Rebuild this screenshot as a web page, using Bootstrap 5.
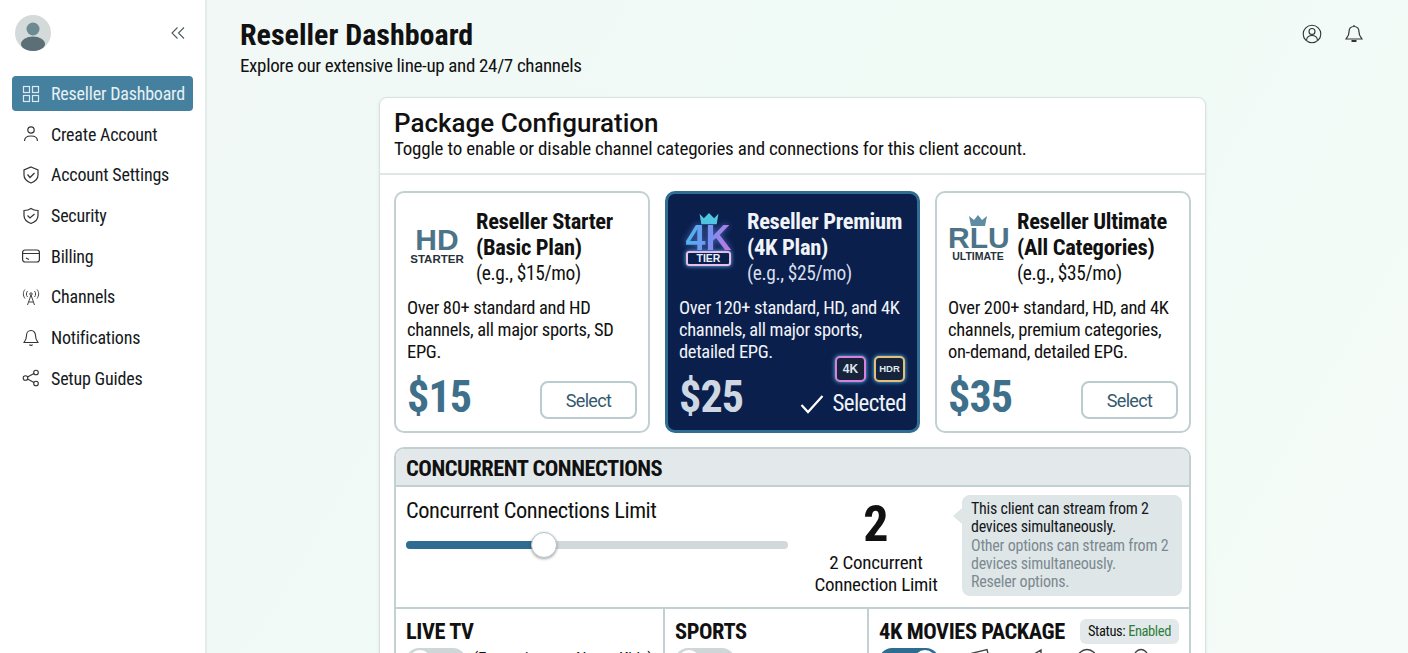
<!DOCTYPE html>
<html lang="en">
<head>
  <meta charset="UTF-8">
  <meta name="viewport" content="width=device-width, initial-scale=1.0">
  <title>Reseller Dashboard</title>
  <link href="https://cdn.jsdelivr.net/npm/bootstrap@5.3.3/dist/css/bootstrap.min.css" rel="stylesheet">
  <script src="https://cdn.jsdelivr.net/npm/bootstrap@5.3.3/dist/js/bootstrap.bundle.min.js" defer></script>
  <style>
    body {
      font-family: Roboto, "Liberation Sans", sans-serif;
      font-stretch: 75%;
      color: #111;
      height: 653px;
      overflow: hidden;
    }
    .side-panel {
      width: 207px;
      height: 653px;
      background: #fff;
      border-right: 2px solid #e4ecea;
      padding: 15px 12px 0 12px;
    }
    .side-top { margin-bottom: 25px; }
    .avatar-disc {
      width: 36px;
      height: 36px;
      border-radius: 50%;
      background: #d3dad9;
      overflow: hidden;
      margin-left: 3px;
    }
    .side-item {
      display: flex;
      align-items: center;
      gap: 11px;
      height: 35px;
      margin-bottom: 5.7px;
      padding-left: 10px;
      border-radius: 4px;
      font-size: 18px;
      letter-spacing: -.2px;
      color: #15191c;
      text-decoration: none;
    }
    .side-item.on {
      background: #46809f;
      color: #e6f1f5;
    }
    .side-item svg { flex: none; }
    .main-area {
      height: 653px;
      padding: 16px 0 0 33px;
      background: linear-gradient(120deg, #f1f8f6, #f0fbf6 55%, #f5fbf8);
    }
    .page-title {
      font-size: 30px;
      font-weight: 700;
      font-stretch: 80%;
      line-height: 38px;
      margin: 0;
    }
    .page-sub { font-size: 19px; line-height: 23px; letter-spacing: -.34px; }
    .top-icons { padding-right: 44px; gap: 22px; }
    .top-glyph { margin-top: 8px; }
    .config-panel {
      width: 827px;
      margin: 20px 0 0 139px;
      background: #fff;
      border: 1px solid #d8e3e1;
      border-radius: 8px;
      box-shadow: 0 1px 3px rgba(60, 90, 90, .12);
    }
    .config-head {
      padding: 10px 14px 0;
      border-bottom: 2px solid #dfe7e6;
      height: 77px;
    }
    .config-title {
      font-size: 26px;
      font-weight: 500;
      font-stretch: 100%;
      line-height: 30px;
      margin: 0;
    }
    .config-sub { font-size: 19px; line-height: 22px; letter-spacing: -.2px; }
    .config-body { padding: 16px 14px 0; }
    .plan-row { display: grid; grid-template-columns: 256px 255px 256px; gap: 15px; }
    .plan-box {
      position: relative;
      height: 242px;
      border: 2px solid #c3d0d2;
      border-radius: 10px;
      padding: 16px 11px;
      background: #fff;
    }
    .plan-box.picked {
      background: #0b1f4d;
      border: 3px solid #2f6d92;
      color: #f0f4f8;
      padding: 15px 10px 15px 11px;
    }
    .plan-top { display: flex; gap: 9px; height: 84px; }
    .plan-logo { width: 60px; flex: none; text-align: center; }
    .picked .plan-logo { width: 59px; }
    .plan-name { font-size: 22.5px; font-weight: 700; line-height: 26px; letter-spacing: -.3px; white-space: nowrap; margin-top: -1px; }
    .plan-note { font-size: 19.4px; line-height: 27px; letter-spacing: -.35px; }
    .plan-note.dim { color: #d6deea; }
    .plan-desc { font-size: 18.5px; line-height: 22px; margin-top: 4px; letter-spacing: -.32px; }
    .plan-foot {
      position: absolute;
      left: 11px;
      right: 11px;
      bottom: 11px;
      display: flex;
      justify-content: space-between;
      align-items: flex-end;
    }
    .picked .plan-foot { bottom: 10px; }
    .plan-price {
      font-size: 44px;
      font-weight: 700;
      line-height: 46px;
      letter-spacing: -.8px;
      color: #3e6f8b;
    }
    .picked .plan-price { color: #cfd8e2; }
    .pick-btn {
      width: 97px;
      height: 38px;
      padding: 0;
      margin-bottom: 1px;
      font-size: 18px;
      letter-spacing: -.7px;
      color: #34596f;
      border: 2px solid #bccbce;
      border-radius: 8px;
      background: #fff;
    }
    .logo-big {
      font-family: "Liberation Sans", sans-serif;
      font-stretch: 100%;
      font-weight: 700;
      font-size: 30px;
      line-height: 26px;
      color: #4d7389;
    }
    .logo-big.tight { line-height: 24px; }
    .logo-small {
      font-family: "Liberation Sans", sans-serif;
      font-stretch: 100%;
      font-weight: 700;
      font-size: 11.5px;
      line-height: 13px;
      color: #26323a;
    }
    .logo-small.wide { font-size: 10.5px; }
    .logo-hd { padding-top: 18px; }
    .logo-premium { padding-top: 3px; }
    .logo-rlu { padding-top: 6px; }
    .logo-4k {
      font-family: "Liberation Sans", sans-serif;
      font-stretch: 100%;
      font-weight: 700;
      font-size: 36px;
      line-height: 26px;
      margin-top: -1px;
      background: linear-gradient(100deg, #38c6ef, #7d8df0 55%, #e56fd6);
      -webkit-background-clip: text;
      background-clip: text;
      color: transparent;
      filter: drop-shadow(0 0 3px rgba(110, 150, 255, .6));
    }
    .logo-tier {
      width: 45px;
      margin: 0 auto;
      border: 2px solid #e8bfe6;
      border-radius: 3px;
      font-family: "Liberation Sans", sans-serif;
      font-stretch: 100%;
      font-weight: 700;
      font-size: 10.5px;
      line-height: 11px;
      color: #e6f0ff;
      box-shadow: 0 0 4px #6fc0ff;
    }
    .fmt-badges {
      position: absolute;
      top: 162px;
      right: 12px;
      display: flex;
      gap: 8px;
    }
    .fmt-badge {
      width: 31px;
      height: 26px;
      border: 2px solid #d97fe0;
      border-radius: 5px;
      background: #17233a;
      font-family: "Liberation Sans", sans-serif;
      font-stretch: 100%;
      font-weight: 700;
      font-size: 12px;
      line-height: 22px;
      text-align: center;
      color: #dfe6ee;
      box-shadow: 0 0 4px #5cc7ea;
    }
    .fmt-badge.hdr { border-color: #e5c07a; font-size: 9.5px; }
    .picked-label { font-size: 23px; line-height: 30px; letter-spacing: -.6px; color: #eef2f6; margin-bottom: 1px; }
    .conn-box {
      margin-top: 14px;
      border: 2px solid #c3d0d2;
      border-bottom: 0;
      border-radius: 10px 10px 0 0;
      overflow: hidden;
    }
    .conn-head {
      height: 38px;
      padding-left: 10px;
      background: #e3e9ea;
      border-bottom: 2px solid #c3d0d2;
      font-size: 22.5px;
      font-weight: 700;
      line-height: 38px;
      letter-spacing: -.5px;
    }
    .conn-body {
      display: flex;
      height: 122px;
      border-bottom: 2px solid #c3d0d2;
    }
    .limit-col { width: 411px; padding: 8px 0 0 10px; }
    .limit-label { font-size: 22.4px; line-height: 30px; letter-spacing: -.43px; }
    .track {
      position: relative;
      width: 382px;
      height: 8px;
      margin-top: 16px;
      border-radius: 4px;
      background: #d1d9da;
    }
    .track-fill {
      height: 8px;
      border-radius: 4px;
      background: #2f6c92;
    }
    .track-knob {
      position: absolute;
      top: -9px;
      width: 26px;
      height: 26px;
      border-radius: 50%;
      background: #fff;
      border: 1px solid #b8c4c8;
      box-shadow: 0 1px 3px rgba(0, 0, 0, .35);
    }
    .count-col { width: 138px; text-align: center; padding-top: 9px; }
    .count-num { font-size: 50px; font-weight: 700; line-height: 56px; }
    .count-note { font-size: 19px; line-height: 22px; letter-spacing: -.25px; white-space: nowrap; }
    .tip-bubble {
      position: relative;
      width: 220px;
      height: 101px;
      margin: 8px 0 0 17px;
      padding: 5px 0 0 9px;
      border-radius: 8px;
      background: #dfe6e8;
      font-size: 16px;
      line-height: 18.3px;
      letter-spacing: -.24px;
      color: #7b8a90;
    }
    .tip-bubble::before {
      content: "";
      position: absolute;
      left: -9px;
      top: 13px;
      border-style: solid;
      border-width: 8px 9px 8px 0;
      border-color: transparent #dfe6e8 transparent transparent;
    }
    .tip-bubble strong { font-weight: 400; color: #14181b; }
    .cat-row { display: grid; grid-template-columns: 269px 204px 1fr; }
    .cat-col { height: 90px; padding: 8px 10px 0; border-right: 2px solid #c3d0d2; }
    .cat-col:last-child { border-right: 0; }
    .cat-title { font-size: 22.4px; font-weight: 700; line-height: 28px; letter-spacing: -.4px; white-space: nowrap; }
    .status-pill {
      padding: 0 8px;
      height: 25px;
      border-radius: 6px;
      background: #e3e9ea;
      font-size: 14.5px;
      line-height: 25px;
      letter-spacing: -.4px;
      white-space: nowrap;
    }
    .status-pill span { color: #2e7d3c; }
    .cat-switch {
      position: relative;
      flex: none;
      width: 60px;
      height: 26px;
      border-radius: 13px;
      background: #ced6d7;
    }
    .cat-switch::after {
      content: "";
      position: absolute;
      top: 2px;
      left: 3px;
      width: 22px;
      height: 22px;
      border-radius: 50%;
      background: #fff;
    }
    .cat-switch.live { background: #2f6c92; }
    .cat-switch.live::after { left: 35px; }
    .cat-extra { font-size: 17px; line-height: 20px; letter-spacing: -.26px; white-space: nowrap; }
    .cat-line { display: flex; gap: 7px; margin-top: 3px; }
    .cat-glyphs { gap: 32px; margin-left: 22px; }
  </style>
</head>
<body>
  <div class="d-flex">
    <!-- sidebar -->
    <aside class="side-panel flex-shrink-0">
      <div class="d-flex justify-content-between align-items-center pe-2 side-top">
        <div class="avatar-disc">
          <svg width="36" height="36" viewBox="0 0 36 36"><circle cx="18" cy="14" r="6.5" fill="#6d8a92"/><ellipse cx="18" cy="29" rx="12" ry="7.5" fill="#5d6f76"/></svg>
        </div>
        <svg width="14" height="14" viewBox="0 0 14 14" fill="none" stroke="#4a5a62" stroke-width="1.1"><path d="M6.500 1.500 1 7l5.500 5.500M13 1.500 7.500 7l5.500 5.500"/></svg>
      </div>
      <a class="side-item on" href="#">
        <svg width="18" height="18" viewBox="0 0 18 18" fill="none" stroke="#dcebf1" stroke-width="1.2"><rect x="1.5" y="1.5" width="6" height="6"/><rect x="10.5" y="1.5" width="6" height="6"/><rect x="1.5" y="10.5" width="6" height="6"/><rect x="10.5" y="10.5" width="6" height="6"/></svg>
        Reseller Dashboard
      </a>
      <a class="side-item" href="#">
        <svg width="18" height="18" viewBox="0 0 18 18" fill="none" stroke="#333" stroke-width="1.2"><circle cx="9" cy="5" r="3.2"/><path d="M2.500 16c0-3.500 2.500-5 6.500-5s6.500 1.500 6.500 5"/></svg>
        Create Account
      </a>
      <a class="side-item" href="#">
        <svg width="18" height="18" viewBox="0 0 18 18" fill="none" stroke="#333" stroke-width="1.2"><path d="M9 1 16 4v5c0 4-3 6.500-7 8-4-1.500-7-4-7-8V4z"/><path d="m5.500 8.500 2.500 3 4.500-4.500"/></svg>
        Account Settings
      </a>
      <a class="side-item" href="#">
        <svg width="18" height="18" viewBox="0 0 18 18" fill="none" stroke="#333" stroke-width="1.2"><path d="M9 1.500c2 1.500 4.500 2 7 2v5c0 4-3 6.500-7 8-4-1.500-7-4-7-8v-5c2.500 0 5-.5 7-2z"/><path d="m5.500 8.500 2.500 2.500 4.500-4"/></svg>
        Security
      </a>
      <a class="side-item" href="#">
        <svg width="18" height="18" viewBox="0 0 18 18" fill="none" stroke="#333" stroke-width="1.2"><rect x=".6" y="3" width="16.800" height="12" rx="2.500"/><path d="M1 6.500h16M4 11l3 1.500"/></svg>
        Billing
      </a>
      <a class="side-item" href="#">
        <svg width="18" height="18" viewBox="0 0 18 18" fill="none" stroke="#444" stroke-width="1"><path d="M9 7 5.500 17M9 7l3.500 10M6.500 14h5"/><circle cx="9" cy="6" r="1.200"/><path d="M5.500 9c-1.500-2-1.500-4 0-6M12.500 9c1.500-2 1.500-4 0-6M3 10.500C.8 7.500.8 4 3 1.500M15 10.500c2.200-3 2.200-6.500 0-9"/></svg>
        Channels
      </a>
      <a class="side-item" href="#">
        <svg width="18" height="18" viewBox="0 0 18 18" fill="none" stroke="#333" stroke-width="1.1"><path d="M9 1.500c-3 0-4.500 2.500-4.500 5 0 4-2 6-2.500 7h14c-.5-1-2.500-3-2.500-7 0-2.500-1.500-5-4.500-5z"/><path d="M7.500 15.500c.5 1.200 2.500 1.200 3 0"/></svg>
        Notifications
      </a>
      <a class="side-item" href="#">
        <svg width="18" height="18" viewBox="0 0 18 18" fill="none" stroke="#333" stroke-width="1.1"><circle cx="3.500" cy="9" r="2.300"/><circle cx="14" cy="3.500" r="2.300"/><circle cx="14" cy="14.500" r="2.300"/><path d="m5.500 8 6.500-3.500M5.500 10l6.500 3.500"/></svg>
        Setup Guides
      </a>
    </aside>

    <main class="main-area flex-grow-1">
      <div class="d-flex justify-content-between align-items-start">
        <div>
          <h1 class="page-title">Reseller Dashboard</h1>
          <div class="page-sub">Explore our extensive line-up and 24/7 channels</div>
        </div>
        <div class="d-flex top-icons">
          <svg class="top-glyph" width="20" height="20" viewBox="0 0 20 20" fill="none" stroke="#333" stroke-width="1.1"><circle cx="10" cy="10" r="8.800"/><circle cx="10" cy="7.500" r="3"/><path d="M4.500 16c.5-3 3-4.500 5.500-4.500s5 1.500 5.500 4.500"/></svg>
          <svg class="top-glyph" width="20" height="20" viewBox="0 0 20 20" fill="none" stroke="#333" stroke-width="1.2"><path d="M10 1v1.500M10 2.500c-3.500 0-5 2.500-5 5.500 0 4-2 5-3 7h16c-1-2-3-3-3-7 0-3-1.500-5.500-5-5.500z"/><path d="M7.500 17h5" stroke-width="2"/></svg>
        </div>
      </div>

      <section class="config-panel">
        <div class="config-head">
          <h2 class="config-title">Package Configuration</h2>
          <div class="config-sub">Toggle to enable or disable channel categories and connections for this client account.</div>
        </div>
        <div class="config-body">
          <div class="plan-row">
            <div class="plan-box">
              <div class="plan-top">
                <div class="plan-logo logo-hd">
                  <div class="logo-big">HD</div>
                  <div class="logo-small">STARTER</div>
                </div>
                <div>
                  <div class="plan-name">Reseller Starter<br>(Basic Plan)</div>
                  <div class="plan-note">(e.g., $15/mo)</div>
                </div>
              </div>
              <div class="plan-desc">Over 80+ standard and HD channels, all major sports, SD EPG.</div>
              <div class="plan-foot">
                <span class="plan-price">$15</span>
                <button type="button" class="btn pick-btn">Select</button>
              </div>
            </div>

            <div class="plan-box picked">
              <div class="plan-top">
                <div class="plan-logo logo-premium">
                  <svg class="d-block mx-auto" width="24" height="14" viewBox="0 0 28 14"><path d="M3 1 8 6l6-6 6 6 5-5-2 12H5z" fill="#4fc6e0"/></svg>
                  <div class="logo-4k">4K</div>
                  <div class="logo-tier">TIER</div>
                </div>
                <div>
                  <div class="plan-name">Reseller Premium<br>(4K Plan)</div>
                  <div class="plan-note dim">(e.g., $25/mo)</div>
                </div>
              </div>
              <div class="plan-desc">Over 120+ standard, HD, and 4K channels, all major sports, detailed EPG.</div>
              <div class="fmt-badges">
                <div class="fmt-badge">4K</div>
                <div class="fmt-badge hdr">HDR</div>
              </div>
              <div class="plan-foot">
                <span class="plan-price">$25</span>
                <span class="d-flex align-items-center gap-2 picked-label">
                  <svg width="24" height="20" viewBox="0 0 24 20" fill="none" stroke="#fff" stroke-width="2.200"><path d="m1.500 11 6.500 7L22.500 2"/></svg>
                  Selected
                </span>
              </div>
            </div>

            <div class="plan-box">
              <div class="plan-top">
                <div class="plan-logo logo-rlu">
                  <svg class="d-block mx-auto" width="20" height="11" viewBox="0 0 20 11"><path d="M1 1 6 5l4-5 4 5 5-4-2 10H3z" fill="#5f8ba3"/></svg>
                  <div class="logo-big tight">RLU</div>
                  <div class="logo-small wide">ULTIMATE</div>
                </div>
                <div>
                  <div class="plan-name">Reseller Ultimate<br>(All Categories)</div>
                  <div class="plan-note">(e.g., $35/mo)</div>
                </div>
              </div>
              <div class="plan-desc">Over 200+ standard, HD, and 4K channels, premium categories, on-demand, detailed EPG.</div>
              <div class="plan-foot">
                <span class="plan-price">$35</span>
                <button type="button" class="btn pick-btn">Select</button>
              </div>
            </div>
          </div>

          <div class="conn-box">
            <div class="conn-head">CONCURRENT CONNECTIONS</div>
            <div class="conn-body">
              <div class="limit-col">
                <div class="limit-label">Concurrent Connections Limit</div>
                <div class="track">
                  <div class="track-fill" style="width: 36%"></div>
                  <div class="track-knob" style="left: 125px"></div>
                </div>
              </div>
              <div class="count-col">
                <div class="count-num">2</div>
                <div class="count-note">2 Concurrent<br>Connection Limit</div>
              </div>
              <div class="tip-bubble">
                <strong>This client can stream from 2 devices simultaneously.</strong><br>
                Other options can stream from 2 devices simultaneously.<br>
                Reseler options.
              </div>
            </div>
            <div class="cat-row">
              <div class="cat-col">
                <div class="cat-title">LIVE TV</div>
                <div class="cat-line"><div class="cat-switch"></div><div class="cat-extra">(Entertainment, News, Kids)</div></div>
              </div>
              <div class="cat-col">
                <div class="cat-title">SPORTS</div>
                <div class="cat-line"><div class="cat-switch"></div></div>
              </div>
              <div class="cat-col">
                <div class="d-flex justify-content-between align-items-center">
                  <div class="cat-title">4K MOVIES PACKAGE</div>
                  <div class="status-pill">Status: <span>Enabled</span></div>
                </div>
                <div class="cat-line">
                  <div class="cat-switch live"></div>
                  <div class="d-flex cat-glyphs">
                    <svg width="22" height="22" viewBox="0 0 22 22" fill="none" stroke="#444" stroke-width="1.4"><path d="M1 6 19 1.500l1 4L2 10zM2 10v10h18V10z"/></svg>
                    <svg width="22" height="22" viewBox="0 0 22 22" fill="none" stroke="#444" stroke-width="1.4"><path d="M2 9h5L19 2v18L7 14H2z"/></svg>
                    <svg width="22" height="22" viewBox="0 0 22 22" fill="none" stroke="#444" stroke-width="1.4"><circle cx="11" cy="11" r="9.500"/></svg>
                    <svg width="22" height="22" viewBox="0 0 22 22" fill="none" stroke="#444" stroke-width="1.4"><circle cx="11" cy="8" r="6.500"/><path d="M4 20h14"/></svg>
                  </div>
                </div>
              </div>
            </div>
          </div>
        </div>
      </section>
    </main>
  </div>
</body>
</html>
